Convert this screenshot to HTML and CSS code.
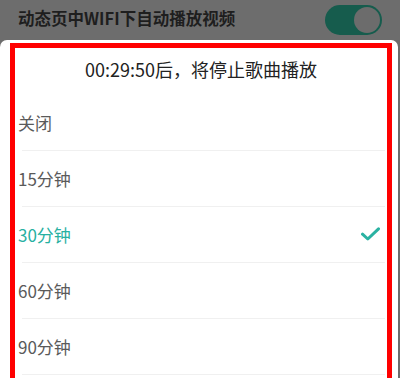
FILE: index.html
```html
<!DOCTYPE html>
<html lang="zh-CN">
<head>
    <meta charset="UTF-8">
    <meta name="viewport" content="width=device-width, initial-scale=1.0">
    <title>定时停止播放</title>
    <link rel="stylesheet" href="styles.css">
</head>
<body>
    <div class="setting">
        <span class="setting-name">动态页中WIFI下自动播放视频</span>
        <div class="switch on">
            <div class="knob"></div>
        </div>
    </div>

    <div class="sheet">
        <div class="mark">
            <div class="countdown">00:29:50后，将停止歌曲播放</div>
            <div class="opt">关闭</div>
            <div class="line"></div>
            <div class="opt">15分钟</div>
            <div class="line"></div>
            <div class="opt sel">
                <span>30分钟</span>
                <svg class="tick" width="19" height="14" viewBox="0 0 19 14">
                    <path d="M1.5 7.2 L6.8 12 L17.5 1.8" fill="none" stroke="#2bb2a2" stroke-width="3" stroke-linecap="round" stroke-linejoin="round"/>
                </svg>
            </div>
            <div class="line"></div>
            <div class="opt">60分钟</div>
            <div class="line"></div>
            <div class="opt">90分钟</div>
            <div class="line"></div>
        </div>
    </div>
</body>
</html>
```

FILE: styles.css
```css
body {
    margin: 0;
    height: 378px;
    overflow: hidden;
    background-color: #6d6d6d;
    font-family: "Noto Sans CJK SC", "Noto Sans", sans-serif;
}

.setting {
    height: 40px;
    display: flex;
    align-items: center;
    justify-content: space-between;
    padding: 0 18px 4px 18px;
    box-sizing: border-box;
}

.setting-name {
    font-size: 16.5px;
    font-weight: bold;
    color: #1e1e1e;
}

.switch {
    width: 57px;
    height: 30px;
    border-radius: 15px;
    background-color: #165c4d;
    display: flex;
    align-items: center;
    justify-content: flex-end;
    padding: 0 2px;
    box-sizing: border-box;
    margin-top: 4px;
}

.knob {
    width: 26px;
    height: 26px;
    border-radius: 50%;
    background-color: #6c6c6c;
}

.sheet {
    margin-right: 2px;
    height: 338px;
    background-color: #ffffff;
    border-radius: 7px 7px 0 0;
    padding: 3px 0 0 10px;
    box-sizing: border-box;
}

.mark {
    width: 382px;
    height: 335px;
    overflow: hidden;
    border: 5px solid #ff0000;
    border-bottom: none;
    box-sizing: border-box;
}

.countdown {
    line-height: 42px;
    padding-bottom: 5px;
    text-align: center;
    font-size: 18px;
    color: #222222;
}

.opt {
    height: 55px;
    display: flex;
    align-items: center;
    justify-content: space-between;
    padding: 0 7px 0 3px;
    box-sizing: border-box;
    font-size: 17px;
    color: #5a5a5a;
}

.opt.sel {
    color: #27b0a1;
}

.tick {
    margin-top: -2px;
}

.line {
    height: 1px;
    margin: 0 2px 0 7px;
    background-color: #f0f0f0;
}
```
